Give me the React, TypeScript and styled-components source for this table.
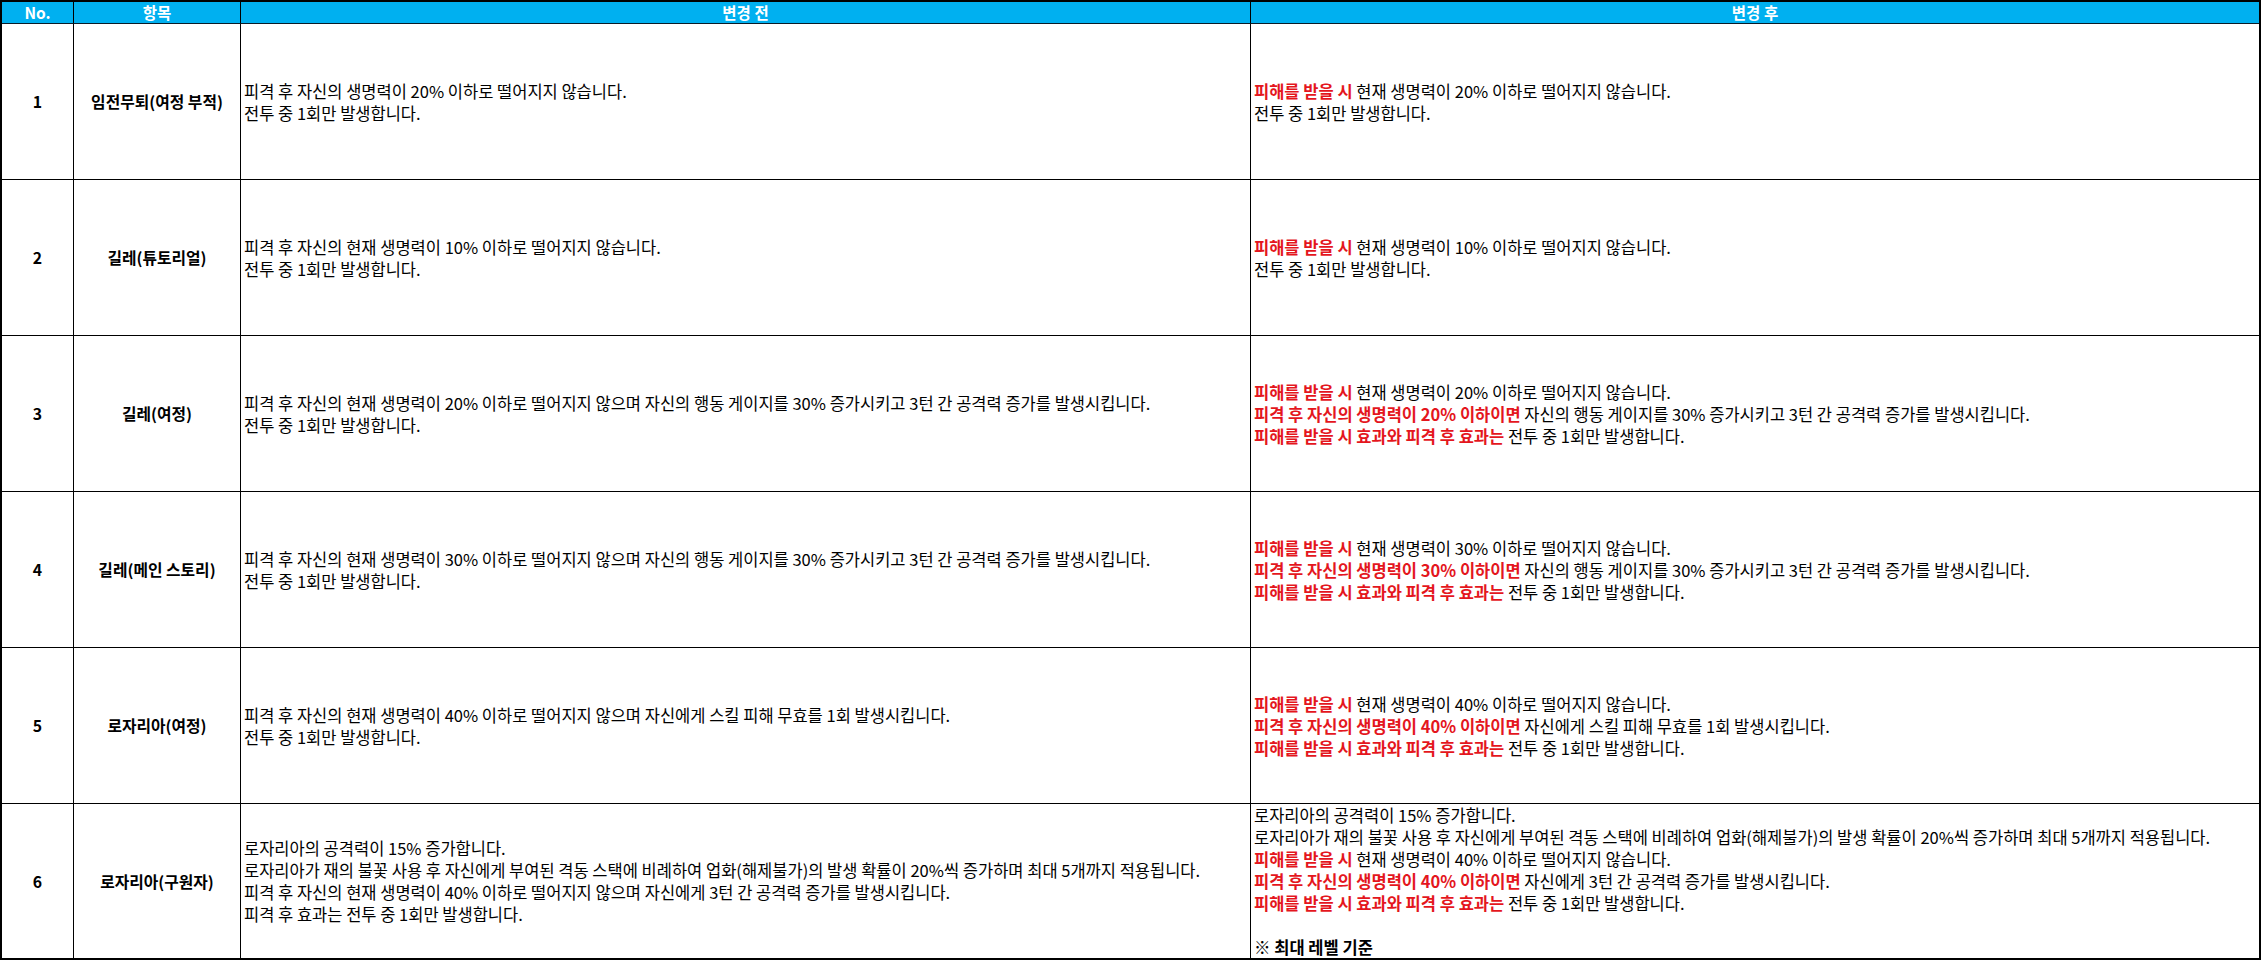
import styled, { createGlobalStyle } from 'styled-components';

const GlobalStyle = createGlobalStyle`
  html, body {
    margin: 0;
    padding: 0;
    background: #fff;
  }
  body {
    font-family: "Noto Sans CJK KR", "Malgun Gothic", sans-serif;
    color: #000;
  }
`;

const Table = styled.div`
  box-sizing: border-box;
  width: 2261px;
  height: 960px;
  border: 2px solid #000;
  display: grid;
  grid-template-columns: 72px 167px 1010px 1fr;
  grid-template-rows: 22px repeat(5, 156px) 1fr;
  font-size: 16.5px;
`;

const HeadCell = styled.div<{ $last?: boolean }>`
  background: #00b0f0;
  color: #fff;
  font-weight: 700;
  font-size: 15.5px;
  display: flex;
  align-items: center;
  justify-content: center;
  border-bottom: 1px solid #0b1c28;
  border-right: ${(p) => (p.$last ? 'none' : '1px solid #000')};
  line-height: 1;
`;

const Cell = styled.div<{ $last?: boolean; $bottom?: boolean }>`
  display: flex;
  flex-direction: column;
  justify-content: center;
  border-right: ${(p) => (p.$last ? 'none' : '1px solid #000')};
  border-bottom: ${(p) => (p.$bottom ? 'none' : '1px solid #000')};
  overflow: hidden;
`;

const KeyCell = styled(Cell)`
  align-items: center;
  font-weight: 700;
  font-size: 15.8px;
`;

const TextCell = styled(Cell)`
  padding-left: 3px;
  line-height: 22px;
  white-space: nowrap;
`;

const Line = styled.div<{ $strong?: boolean }>`
  min-height: 22px;
  font-weight: ${(p) => (p.$strong ? 700 : 400)};
`;

const Red = styled.span`
  color: #e4161d;
  font-weight: 700;
`;

type Seg = { t: string; red?: boolean };
type TextLine = { segs: Seg[]; strong?: boolean };

const n = (t: string): Seg => ({ t });
const r = (t: string): Seg => ({ t, red: true });
const L = (...segs: Seg[]): TextLine => ({ segs });

type Row = {
  no: string;
  name: string;
  before: TextLine[];
  after: TextLine[];
};

const once = L(n('전투 중 1회만 발생합니다.'));
const bothOnce = L(r('피해를 받을 시 효과와 피격 후 효과는'), n(' 전투 중 1회만 발생합니다.'));

const rows: Row[] = [
  {
    no: '1',
    name: '임전무퇴(여정 부적)',
    before: [L(n('피격 후 자신의 생명력이 20% 이하로 떨어지지 않습니다.')), once],
    after: [L(r('피해를 받을 시'), n(' 현재 생명력이 20% 이하로 떨어지지 않습니다.')), once],
  },
  {
    no: '2',
    name: '길레(튜토리얼)',
    before: [L(n('피격 후 자신의 현재 생명력이 10% 이하로 떨어지지 않습니다.')), once],
    after: [L(r('피해를 받을 시'), n(' 현재 생명력이 10% 이하로 떨어지지 않습니다.')), once],
  },
  {
    no: '3',
    name: '길레(여정)',
    before: [
      L(n('피격 후 자신의 현재 생명력이 20% 이하로 떨어지지 않으며 자신의 행동 게이지를 30% 증가시키고 3턴 간 공격력 증가를 발생시킵니다.')),
      once,
    ],
    after: [
      L(r('피해를 받을 시'), n(' 현재 생명력이 20% 이하로 떨어지지 않습니다.')),
      L(r('피격 후 자신의 생명력이 20% 이하이면'), n(' 자신의 행동 게이지를 30% 증가시키고 3턴 간 공격력 증가를 발생시킵니다.')),
      bothOnce,
    ],
  },
  {
    no: '4',
    name: '길레(메인 스토리)',
    before: [
      L(n('피격 후 자신의 현재 생명력이 30% 이하로 떨어지지 않으며 자신의 행동 게이지를 30% 증가시키고 3턴 간 공격력 증가를 발생시킵니다.')),
      once,
    ],
    after: [
      L(r('피해를 받을 시'), n(' 현재 생명력이 30% 이하로 떨어지지 않습니다.')),
      L(r('피격 후 자신의 생명력이 30% 이하이면'), n(' 자신의 행동 게이지를 30% 증가시키고 3턴 간 공격력 증가를 발생시킵니다.')),
      bothOnce,
    ],
  },
  {
    no: '5',
    name: '로자리아(여정)',
    before: [
      L(n('피격 후 자신의 현재 생명력이 40% 이하로 떨어지지 않으며 자신에게 스킬 피해 무효를 1회 발생시킵니다.')),
      once,
    ],
    after: [
      L(r('피해를 받을 시'), n(' 현재 생명력이 40% 이하로 떨어지지 않습니다.')),
      L(r('피격 후 자신의 생명력이 40% 이하이면'), n(' 자신에게 스킬 피해 무효를 1회 발생시킵니다.')),
      bothOnce,
    ],
  },
  {
    no: '6',
    name: '로자리아(구원자)',
    before: [
      L(n('로자리아의 공격력이 15% 증가합니다.')),
      L(n('로자리아가 재의 불꽃 사용 후 자신에게 부여된 격동 스택에 비례하여 업화(해제불가)의 발생 확률이 20%씩 증가하며 최대 5개까지 적용됩니다.')),
      L(n('피격 후 자신의 현재 생명력이 40% 이하로 떨어지지 않으며 자신에게 3턴 간 공격력 증가를 발생시킵니다.')),
      L(n('피격 후 효과는 전투 중 1회만 발생합니다.')),
    ],
    after: [
      L(n('로자리아의 공격력이 15% 증가합니다.')),
      L(n('로자리아가 재의 불꽃 사용 후 자신에게 부여된 격동 스택에 비례하여 업화(해제불가)의 발생 확률이 20%씩 증가하며 최대 5개까지 적용됩니다.')),
      L(r('피해를 받을 시'), n(' 현재 생명력이 40% 이하로 떨어지지 않습니다.')),
      L(r('피격 후 자신의 생명력이 40% 이하이면'), n(' 자신에게 3턴 간 공격력 증가를 발생시킵니다.')),
      bothOnce,
      L(),
      { segs: [n('※ 최대 레벨 기준')], strong: true },
    ],
  },
];

const Lines = ({ lines }: { lines: TextLine[] }) => (
  <>
    {lines.map((line, i) => (
      <Line key={i} $strong={line.strong}>
        {line.segs.map((s, j) => (s.red ? <Red key={j}>{s.t}</Red> : <span key={j}>{s.t}</span>))}
      </Line>
    ))}
  </>
);

const App = () => {
  return (
    <>
      <GlobalStyle />
      <Table>
        <HeadCell>No.</HeadCell>
        <HeadCell>항목</HeadCell>
        <HeadCell>변경 전</HeadCell>
        <HeadCell $last>변경 후</HeadCell>
        {rows.map((row, i) => {
          const bottom = i === rows.length - 1;
          return [
            <KeyCell key={`no${i}`} $bottom={bottom}>{row.no}</KeyCell>,
            <KeyCell key={`nm${i}`} $bottom={bottom}>{row.name}</KeyCell>,
            <TextCell key={`b${i}`} $bottom={bottom}>
              <Lines lines={row.before} />
            </TextCell>,
            <TextCell key={`a${i}`} $bottom={bottom} $last>
              <Lines lines={row.after} />
            </TextCell>,
          ];
        })}
      </Table>
    </>
  );
};

export default App;
